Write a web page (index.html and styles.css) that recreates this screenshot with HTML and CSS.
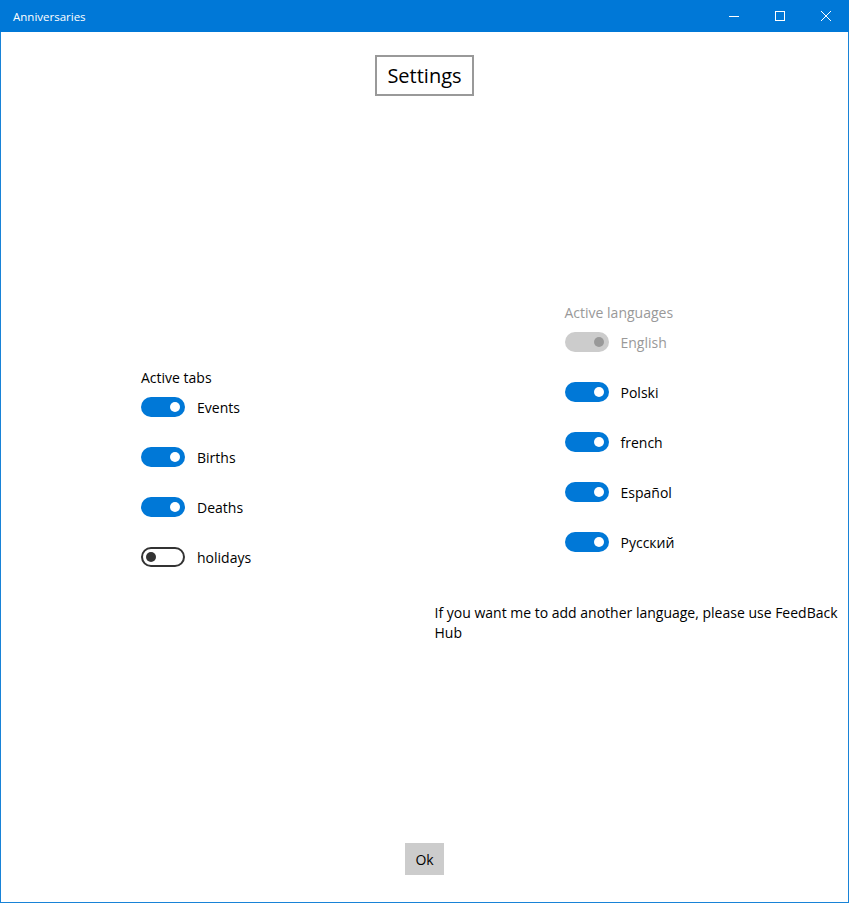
FILE: index.html
```html
<!DOCTYPE html>
<html>
<head>
<meta charset="utf-8">
<link rel="stylesheet" href="styles.css">
</head>
<body>
<div class="window">
  <div class="titlebar">
    <span class="title">Anniversaries</span>
    <div class="controls">
      <div class="ctl"><svg width="10" height="10" viewBox="0 0 10 10"><path d="M0 5.5h10" stroke="#fff" stroke-width="1"/></svg></div>
      <div class="ctl"><svg width="10" height="10" viewBox="0 0 10 10"><rect x="0.5" y="0.5" width="9" height="9" fill="none" stroke="#fff" stroke-width="1"/></svg></div>
      <div class="ctl"><svg width="10" height="10" viewBox="0 0 10 10"><path d="M0 0L10 10M10 0L0 10" stroke="#fff" stroke-width="1"/></svg></div>
    </div>
  </div>
  <div class="content">
    <div class="header"><div class="settings-box">Settings</div></div>
    <div class="middle">
      <div class="col col-left">
        <div class="group">
          <div class="group-label">Active tabs</div>
          <div class="row"><span class="toggle on"><span class="knob"></span></span><span class="row-label">Events</span></div>
          <div class="row"><span class="toggle on"><span class="knob"></span></span><span class="row-label">Births</span></div>
          <div class="row"><span class="toggle on"><span class="knob"></span></span><span class="row-label">Deaths</span></div>
          <div class="row"><span class="toggle off"><span class="knob"></span></span><span class="row-label">holidays</span></div>
        </div>
      </div>
      <div class="col col-right">
        <div class="group group-right">
          <div class="group-label disabled-text">Active languages</div>
          <div class="row"><span class="toggle disabled"><span class="knob"></span></span><span class="row-label disabled-text">English</span></div>
          <div class="row"><span class="toggle on"><span class="knob"></span></span><span class="row-label">Polski</span></div>
          <div class="row"><span class="toggle on"><span class="knob"></span></span><span class="row-label">french</span></div>
          <div class="row"><span class="toggle on"><span class="knob"></span></span><span class="row-label">Español</span></div>
          <div class="row"><span class="toggle on"><span class="knob"></span></span><span class="row-label">Русский</span></div>
        </div>
        <p class="note">If you want me to add another language, please use FeedBack Hub</p>
      </div>
    </div>
    <div class="footer"><button class="ok">Ok</button></div>
  </div>
</div>
</body>
</html>
```

FILE: styles.css
```css
* { box-sizing: border-box; }
html, body { margin: 0; padding: 0; }
body {
  width: 849px;
  height: 903px;
  font-family: "Open Sans", "Noto Sans", sans-serif;
  font-size: 14px;
  color: #000;
  background: #fff;
  overflow: hidden;
}
.window {
  width: 849px;
  height: 903px;
  display: flex;
  flex-direction: column;
  border: 1px solid #1883d7;
  border-top: none;
}
.titlebar {
  height: 32px;
  margin: 0 -1px;
  background: #0078d7;
  color: #fff;
  display: flex;
  align-items: center;
  justify-content: space-between;
  flex-shrink: 0;
}
.title {
  font-size: 11.5px;
  padding-left: 13px;
}
.controls { display: flex; height: 100%; }
.ctl {
  width: 46px;
  height: 100%;
  display: flex;
  align-items: center;
  justify-content: center;
}
.content {
  flex: 1;
  display: flex;
  flex-direction: column;
}
.header {
  display: flex;
  justify-content: center;
  padding-top: 23px;
}
.settings-box {
  border: 2px solid #999;
  font-size: 20px;
  height: 41px;
  padding: 0 10px;
  display: flex;
  align-items: center;
}
.middle {
  flex: 1;
  display: grid;
  grid-template-columns: minmax(0, 1fr) minmax(0, 1fr);
  padding-top: 1px;
}
.col {
  display: flex;
  flex-direction: column;
  justify-content: center;
  min-width: 0;
}
.col-left { padding-left: 140px; }
.col-right { padding-left: 10px; padding-top: 6px; }
.group { display: flex; flex-direction: column; }
.group-right { padding-left: 130px; }
.group-label {
  line-height: 20px;
  margin-bottom: 4px;
}
.row {
  height: 30px;
  display: flex;
  align-items: center;
  margin-bottom: 20px;
}
.row:last-child { margin-bottom: 0; }
.row-label { margin-left: 12px; }
.toggle {
  width: 44px;
  height: 20px;
  border-radius: 10px;
  display: flex;
  align-items: center;
  padding: 0 5px;
}
.knob {
  width: 10px;
  height: 10px;
  border-radius: 50%;
}
.toggle.on { background: #0078d7; justify-content: flex-end; }
.toggle.on .knob { background: #fff; }
.toggle.off { border: 2px solid #333; justify-content: flex-start; padding: 0 3px; }
.toggle.off .knob { background: #333; }
.toggle.disabled { background: #ccc; justify-content: flex-end; }
.toggle.disabled .knob { background: #999; }
.disabled-text { color: #999; }
.note {
  margin: 46px 0 0 0;
  line-height: 20px;
  width: 415px;
}
.footer {
  display: flex;
  justify-content: center;
  padding-bottom: 27px;
}
.ok {
  width: 39px;
  height: 32px;
  border: none;
  background: #ccc;
  font-family: inherit;
  font-size: 14px;
  color: #000;
  padding: 0;
}
```
